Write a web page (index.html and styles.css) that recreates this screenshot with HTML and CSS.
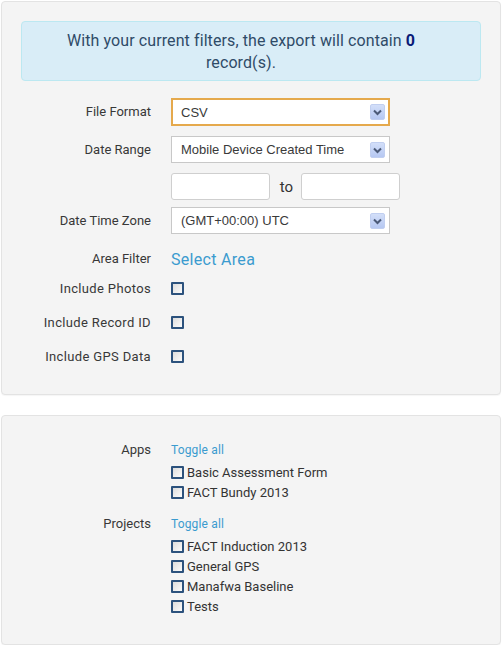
FILE: index.html
```html
<!DOCTYPE html>
<html>
<head>
<meta charset="utf-8">
<link rel="stylesheet" href="styles.css">
</head>
<body>
<div class="page">
  <section class="panel panel-main">
    <div class="alert">With your current filters, the export will contain <b>0</b><br>record(s).</div>
    <div class="form">
      <div class="row r-format">
        <label class="lbl">File Format</label>
        <div class="select focused"><span>CSV</span><span class="arrow"><svg width="15" height="16" viewBox="0 0 15 16"><path d="M4 6.5 L7.5 10 L11 6.5" fill="none" stroke="#4b5a78" stroke-width="2"/></svg></span></div>
      </div>
      <div class="row r-range">
        <label class="lbl">Date Range</label>
        <div class="select"><span>Mobile Device Created Time</span><span class="arrow"><svg width="15" height="16" viewBox="0 0 15 16"><path d="M4 6.5 L7.5 10 L11 6.5" fill="none" stroke="#4b5a78" stroke-width="2"/></svg></span></div>
      </div>
      <div class="row r-dates">
        <span class="lbl"></span>
        <div class="dates"><input class="text" type="text"><span class="to">to</span><input class="text" type="text"></div>
      </div>
      <div class="row r-zone">
        <label class="lbl">Date Time Zone</label>
        <div class="select"><span>(GMT+00:00) UTC</span><span class="arrow"><svg width="15" height="16" viewBox="0 0 15 16"><path d="M4 6.5 L7.5 10 L11 6.5" fill="none" stroke="#4b5a78" stroke-width="2"/></svg></span></div>
      </div>
      <div class="row r-area">
        <label class="lbl">Area Filter</label>
        <a class="area-link">Select Area</a>
      </div>
      <div class="row r-check">
        <label class="lbl">Include Photos</label>
        <div><input class="cb" type="checkbox"></div>
      </div>
      <div class="row r-check">
        <label class="lbl">Include Record ID</label>
        <div><input class="cb" type="checkbox"></div>
      </div>
      <div class="row r-check">
        <label class="lbl">Include GPS Data</label>
        <div><input class="cb" type="checkbox"></div>
      </div>
    </div>
  </section>

  <section class="panel panel-lists">
    <div class="group">
      <div class="lbl">Apps</div>
      <div class="items">
        <a class="toggle">Toggle all</a>
        <label class="item"><input class="cb" type="checkbox"><span>Basic Assessment Form</span></label>
        <label class="item"><input class="cb" type="checkbox"><span>FACT Bundy 2013</span></label>
      </div>
    </div>
    <div class="group">
      <div class="lbl">Projects</div>
      <div class="items">
        <a class="toggle">Toggle all</a>
        <label class="item"><input class="cb" type="checkbox"><span>FACT Induction 2013</span></label>
        <label class="item"><input class="cb" type="checkbox"><span>General GPS</span></label>
        <label class="item"><input class="cb" type="checkbox"><span>Manafwa Baseline</span></label>
        <label class="item"><input class="cb" type="checkbox"><span>Tests</span></label>
      </div>
    </div>
  </section>
</div>
</body>
</html>
```

FILE: styles.css
```css
* { box-sizing: border-box; }
html, body { margin: 0; padding: 0; background: #fff; }
body {
  font-family: Roboto, "Liberation Sans", sans-serif;
  font-size: 13px;
  color: #333;
}
.page { padding: 1px 3px 0 1px; }

.panel {
  background: #f4f4f4;
  border: 1px solid #e3e3e3;
  border-radius: 4px;
  box-shadow: 0 1px 1px rgba(0,0,0,0.04);
}
.panel-main { padding: 19px 19px 29px; height: 394px; }
.panel-lists { margin-top: 20px; padding: 24px 19px 30px; height: 230px; }

.alert {
  background: #d9edf7;
  border: 1px solid #bce8f1;
  border-radius: 4px;
  color: #2f4b68;
  text-align: center;
  font-size: 16px;
  letter-spacing: 0.1px;
  line-height: 22px;
  padding: 8px 30px 8px 10px;
  height: 60px;
}
.alert b { color: #0b1c78; font-weight: 700; }

.form { margin-top: 17px; }
.row {
  display: grid;
  grid-template-columns: 130px 219px;
  column-gap: 20px;
  align-items: center;
}
.lbl {
  text-align: right;
  color: #383838;
  font-size: 13px;
  line-height: 20px;
}
.r-format { height: 28px; margin-bottom: 10px; }
.r-range { height: 27px; margin-bottom: 10px; }
.r-dates { height: 27px; margin-bottom: 7px; grid-template-columns: 130px 240px; }
.r-zone { height: 27px; margin-bottom: 14px; }
.r-area { height: 24px; margin-bottom: 8px; }
.r-area .lbl { margin-top: -2px; }
.r-check { height: 24px; margin-bottom: 10px; align-items: start; }
.r-check .lbl { line-height: 18px; letter-spacing: 0.35px; }

.select {
  height: 100%;
  background: #fff;
  border: 1px solid #c8c8c8;
  display: flex;
  align-items: center;
  justify-content: space-between;
  padding: 0 4px 0 9px;
  font-family: "Liberation Sans", Arial, sans-serif;
  font-size: 13px;
  color: #3a3a3a;
}
.select.focused { border: 2px solid #e5a94c; padding: 0 3px 0 8px; }
.arrow {
  width: 15px; height: 16px;
  border-radius: 2px;
  background: linear-gradient(#d3dff9, #b6c8f2);
  border: 1px solid #c1cff0;
  display: flex;
}
.arrow svg { display: block; margin: -1px; }

.dates { display: flex; align-items: center; height: 27px; }
.text {
  width: 99px; height: 27px;
  border: 1px solid #cfcfcf;
  border-radius: 3px;
  background: #fff;
  margin: 0;
  padding: 0;
}
.to {
  width: 31px;
  text-align: center;
  font-size: 15px;
  color: #333;
  padding-left: 2px;
}
.area-link {
  color: #3b9bcf;
  font-size: 16px;
  letter-spacing: 0.3px;
  line-height: 24px;
  cursor: pointer;
}

.cb {
  -webkit-appearance: none;
  appearance: none;
  width: 13px; height: 13px;
  margin: 2px 0 0;
  border: 2px solid #2c527d;
  border-radius: 1px;
  background: linear-gradient(135deg, #dcdcdc, #fbfbfb);
  display: block;
}

.group {
  display: grid;
  grid-template-columns: 130px 1fr;
  column-gap: 20px;
  align-items: start;
  margin-bottom: 12px;
}
.group .lbl { line-height: 20px; }
.items { display: flex; flex-direction: column; }
.toggle {
  color: #3b9bcf;
  font-size: 12px;
  letter-spacing: 0.15px;
  line-height: 20px;
  height: 22px;
}
.item {
  display: flex;
  align-items: center;
  height: 20px;
  font-size: 13px;
  color: #333;
}
.item .cb { margin: 1px 3px 0 0; }
```
